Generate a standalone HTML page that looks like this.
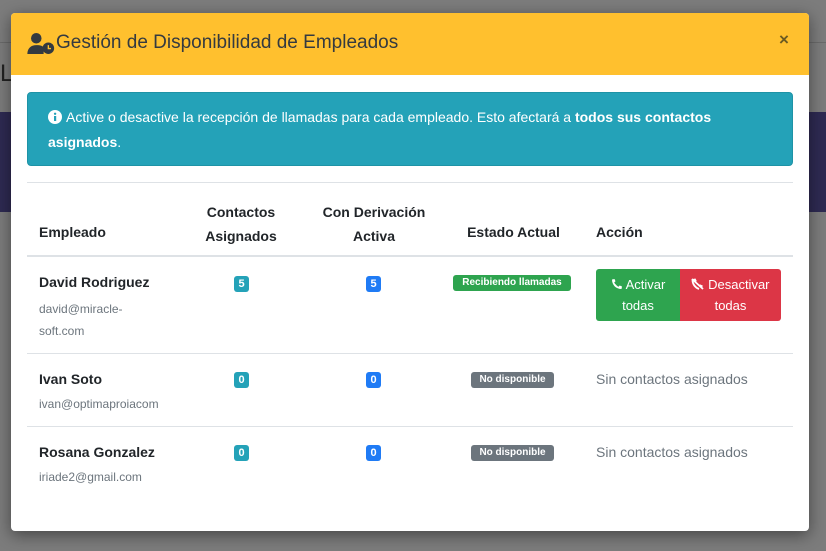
<!DOCTYPE html>
<html><head><meta charset="utf-8"><style>
*{margin:0;padding:0;box-sizing:border-box}
body{width:826px;height:551px;overflow:hidden;background:#7c7c7c;font-family:"Liberation Sans",sans-serif;position:relative;color:#212529}
.a{position:absolute}
.modal{left:11px;top:13px;width:798px;height:518px;background:#fff;border-radius:4px;box-shadow:0 4px 16px rgba(0,0,0,.45);overflow:hidden}
.hdr{left:0;top:0;width:798px;height:62px;background:#ffc02e}
.b{font-weight:bold;font-size:14px;color:#212529}
.badge{position:absolute;color:#fff;font-weight:bold;font-size:10px;border-radius:3px;text-align:center;line-height:16px;height:16px}
.n{font-size:11px}
.em{font-size:12px;color:#6c757d}
.line{position:absolute;left:16px;width:766px;height:1px;background:#dee2e6}
.gray{font-size:14px;color:#6c757d}
</style></head><body>
<div class="a" style="left:0;top:42px;width:826px;height:1px;background:#6a6a6a"></div>
<div class="a" style="left:0;top:112px;width:826px;height:100px;background:#2e2a52"></div>
<div class="a" style="left:0;top:60px;font-size:24px;color:#222">L</div>
<div class="a modal">
 <div class="a hdr"></div>
 <svg class="a" style="left:16px;top:20px" width="28" height="21" viewBox="0 0 26 20"><circle cx="8.5" cy="5" r="5" fill="#343a40"/><path d="M0 20c0-6 4-8.5 8.5-8.5s6 1 7 2v6.5z" fill="#343a40"/><circle cx="20" cy="14.5" r="5.5" fill="#343a40"/><path d="M20 11.5v3.3h2.5" stroke="#ffc02e" stroke-width="1.3" fill="none"/></svg>
 <div class="a" style="left:45px;top:19px;font-size:19px;color:#343a40">Gestión de Disponibilidad de Empleados</div>
 <div class="a" style="left:768px;top:17px;font-size:17px;font-weight:bold;color:#6b5a22">×</div>
 <div class="a" style="left:16px;top:79px;width:766px;height:74px;background:#24a2b8;border:1px solid #1e93a6;border-radius:4px"></div>
 <svg class="a" style="left:37px;top:97px" width="14" height="14" viewBox="0 0 14 14"><circle cx="7" cy="7" r="7" fill="#fff"/><rect x="6" y="6" width="2.2" height="5" fill="#24a2b8"/><circle cx="7.1" cy="3.8" r="1.2" fill="#24a2b8"/></svg>
 <div class="a" style="left:55px;top:96px;font-size:14px;color:#fff;white-space:nowrap">Active o desactive la recepción de llamadas para cada empleado. Esto afectará a <b>todos sus contactos</b></div>
 <div class="a" style="left:37px;top:121px;font-size:14px;color:#fff"><b>asignados</b>.</div>
 <div class="line" style="top:169px"></div>
 <div class="a b" style="left:28px;top:211px">Empleado</div>
 <div class="a b" style="left:170px;top:187px;width:120px;text-align:center;line-height:24px">Contactos<br>Asignados</div>
 <div class="a b" style="left:298px;top:187px;width:130px;text-align:center;line-height:24px">Con Derivación<br>Activa</div>
 <div class="a b" style="left:440px;top:211px;width:125px;text-align:center">Estado Actual</div>
 <div class="a b" style="left:585px;top:211px">Acción</div>
 <div class="line" style="top:242px;height:2px"></div>
 <div class="a b" style="left:28px;top:261px">David Rodriguez</div>
 <div class="a em" style="left:28px;top:285px;line-height:22px">david@miracle-<br>soft.com</div>
 <div class="badge n" style="left:223px;top:263px;width:15px;background:#24a2b8">5</div>
 <div class="badge n" style="left:355px;top:263px;width:15px;background:#1f7bf5">5</div>
 <div class="badge" style="left:442px;top:262px;width:118px;background:#2ea44f">Recibiendo llamadas</div>
 <div class="a" style="left:585px;top:256px;width:84px;height:52px;background:#2ea44f;border-radius:3px 0 0 3px;color:#fff;font-size:13px;text-align:center;line-height:21px;padding-top:5px">
  <svg width="12" height="12" viewBox="0 0 12 12" style="vertical-align:-1px"><path d="M11 8.5l-2.3-1-1.2 1.3C6 8 4 6 3.2 4.5L4.5 3.3 3.5 1 1 1.5C1 7 5 11 10.5 11z" fill="#fff"/></svg> Activar<br>todas</div>
 <div class="a" style="left:669px;top:256px;width:101px;height:52px;background:#dc3646;border-radius:0 3px 3px 0;color:#fff;font-size:13px;text-align:center;line-height:21px;padding-top:5px">
  <svg width="13" height="12" viewBox="0 0 13 12" style="vertical-align:-1px"><path d="M1 1l11 10" stroke="#fff" stroke-width="1.8"/><path d="M11.5 8.5l-2.3-1-1 1M5 3.5L4 1.5 1.5 2C1.5 6 4 9.5 8 11" stroke="#fff" stroke-width="1.8" fill="none"/></svg> Desactivar<br>todas</div>
 <div class="line" style="top:340px"></div>
 <div class="a b" style="left:28px;top:358px">Ivan Soto</div>
 <div class="a em" style="left:28px;top:384px">ivan@optimaproiacom</div>
 <div class="badge n" style="left:223px;top:359px;width:15px;background:#24a2b8">0</div>
 <div class="badge n" style="left:355px;top:359px;width:15px;background:#1f7bf5">0</div>
 <div class="badge" style="left:460px;top:359px;width:83px;background:#6c757d">No disponible</div>
 <div class="a gray" style="left:585px;top:358px">Sin contactos asignados</div>
 <div class="line" style="top:413px"></div>
 <div class="a b" style="left:28px;top:431px">Rosana Gonzalez</div>
 <div class="a em" style="left:28px;top:457px">iriade2@gmail.com</div>
 <div class="badge n" style="left:223px;top:432px;width:15px;background:#24a2b8">0</div>
 <div class="badge n" style="left:355px;top:432px;width:15px;background:#1f7bf5">0</div>
 <div class="badge" style="left:460px;top:432px;width:83px;background:#6c757d">No disponible</div>
 <div class="a gray" style="left:585px;top:431px">Sin contactos asignados</div>
</div>
</body></html>
